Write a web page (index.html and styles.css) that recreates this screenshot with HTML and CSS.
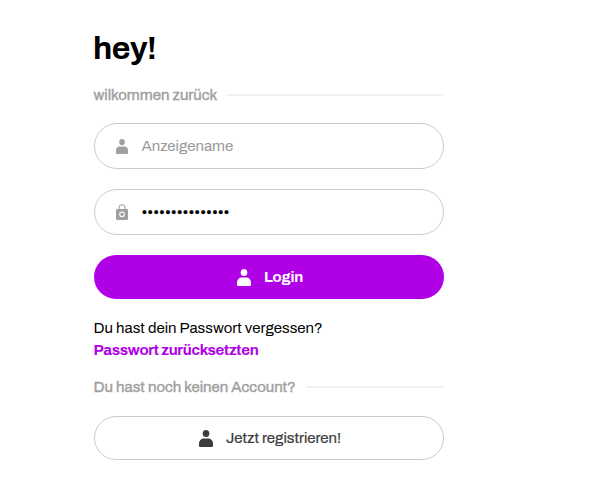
FILE: index.html
```html
<!DOCTYPE html>
<html lang="de">
<head>
<meta charset="utf-8">
<title>Login</title>
<link rel="stylesheet" href="styles.css">
</head>
<body>
<svg class="sprite" aria-hidden="true">
  <symbol id="user" viewBox="0 0 14 16" preserveAspectRatio="none"><circle cx="7" cy="3.3" r="3.3"/><path d="M4.600 8h4.800A4.600 4.600 0 0 1 14 12.500V15a1 1 0 0 1-1 1H1a1 1 0 0 1-1-1v-2.500A4.600 4.600 0 0 1 4.600 8z"/></symbol>
</svg>
<main class="login">
  <h1 class="title">hey!</h1>
  <div class="divider divider-welcome"><span class="welcome">wilkommen zurück</span></div>
  <form class="form">
    <label class="field">
      <svg class="icon" viewBox="0 0 12 15"><use href="#user" width="12" height="15"/></svg>
      <input class="input" type="text" placeholder="Anzeigename">
    </label>
    <label class="field">
      <svg class="icon icon-lock" viewBox="0 0 12 16"><path class="shackle" d="M3 6V3.800a3 3 0 0 1 6 0V6"/><rect y="5" width="12" height="11" rx="1.300"/><circle class="keyhole" cx="6" cy="10.300" r="2.300"/></svg>
      <span class="dots">•••••••••••••••</span>
    </label>
    <button class="button primary" type="button"><svg class="button-icon"><use href="#user"/></svg><span class="login-text">Login</span></button>
  </form>
  <p class="forgot"><span class="question">Du hast dein Passwort vergessen?</span><a class="reset">Passwort zurücksetzten</a></p>
  <div class="divider divider-account"><span class="account">Du hast noch keinen Account?</span></div>
  <button class="button secondary" type="button"><svg class="button-icon"><use href="#user"/></svg><span class="register-text">Jetzt registrieren!</span></button>
</main>
</body>
</html>
```
FILE: styles.css
```css
* { box-sizing: border-box; }
body { margin: 0; background: #fff; color: #000; font: 15px/22px Archivo, "Liberation Sans", sans-serif; }
.sprite { display: none; }
.login { width: 350px; margin-left: 94px; padding-top: 29px; }
.title { margin: 0 0 0 -1px; font-size: 32px; line-height: 40px; letter-spacing: -0.5px; }
.divider { display: flex; align-items: center; gap: 10px; margin-left: -0.5px; color: #a0a0a0; white-space: nowrap; -webkit-text-stroke: 0.4px #a0a0a0; }
.divider::after { content: ""; flex: 1; height: 2px; background: #f2f2f2; }
.divider-welcome { margin-top: 15px; }
.welcome { margin-right: -0.5px; }
.form { display: flex; flex-direction: column; gap: 20px; margin-top: 17px; }
.field { display: flex; align-items: center; gap: 13.5px; height: 46px; padding-left: 21px; border: 1px solid #ccc; border-radius: 23px; }
.icon { width: 12px; height: 15px; fill: #a0a0a0; }
.icon-lock { height: 16px; }
.shackle { fill: none; stroke: #a0a0a0; stroke-width: 1.1; }
.keyhole { fill: none; stroke: #fff; stroke-width: 1.1; }
.input { flex: 1; min-width: 0; padding: 0; border: 0; outline: 0; background: none; font: inherit; }
.input::placeholder { color: #999; opacity: 1; }
.dots { letter-spacing: 0; -webkit-text-stroke: 0.25px #000; }
.button { display: flex; align-items: center; justify-content: center; gap: 13px; width: 100%; height: 44px; padding: 0 0 0 2px; border-radius: 22px; font: inherit; white-space: nowrap; }
.button-icon { width: 14px; height: 17px; fill: currentColor; }
.button-icon use { width: 14px; height: 17px; }
.primary { border: 0; background: #b000e6; color: #fff; font-weight: 700; }
.login-text { letter-spacing: -0.2px; }
.secondary { margin-top: 18px; border: 1px solid #ccc; background: #fff; color: #3c3c3c; -webkit-text-stroke: 0.2px #3c3c3c; }
.forgot { display: flex; flex-direction: column; align-items: flex-start; margin: 18px 0 0 -0.5px; white-space: nowrap; }
.reset { color: #b000e6; font-weight: 700; letter-spacing: -0.3px; }
.divider-account { margin-top: 15px; }
```
